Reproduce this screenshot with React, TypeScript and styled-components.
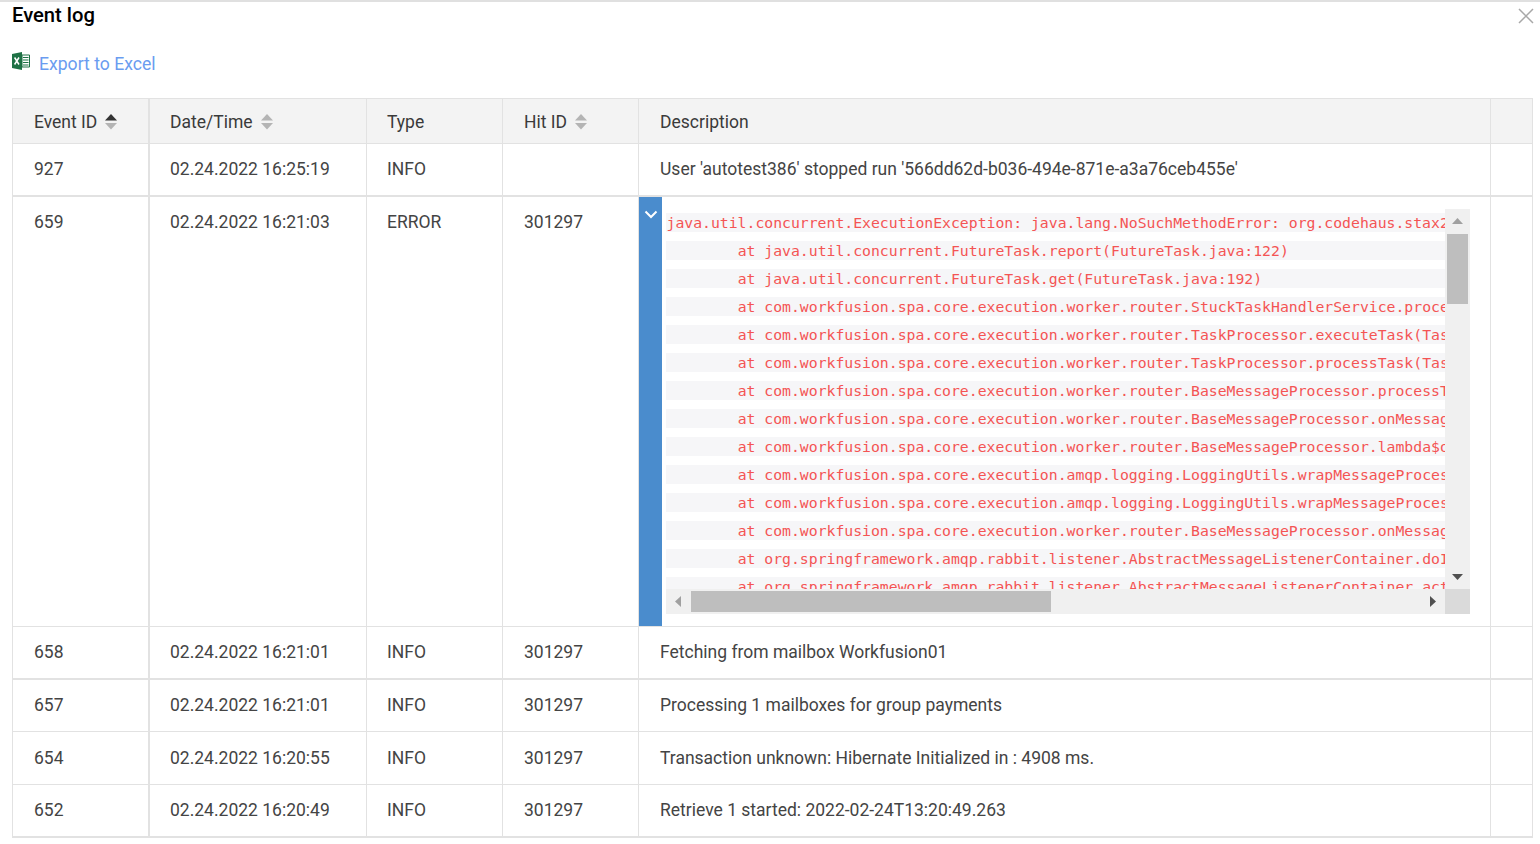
import React from 'react';
import styled, { createGlobalStyle } from 'styled-components';

const GlobalStyle = createGlobalStyle`
  html, body {
    margin: 0;
    padding: 0;
    background: #fff;
    font-family: Roboto, "Liberation Sans", sans-serif;
    overflow: hidden;
  }
`;

const Page = styled.div`
  width: 1540px;
  height: 844px;
  border-top: 2px solid #e0e0e0;
  box-sizing: border-box;
  padding: 0 7px 0 12px;
  overflow: hidden;
`;

const TitleRow = styled.div`
  height: 26px;
  display: flex;
  align-items: flex-start;
  justify-content: space-between;
`;

const Title = styled.h1`
  margin: 0;
  font-size: 20.2px;
  font-weight: 500;
  color: #000;
  line-height: 26px;
`;

const CloseIcon = styled.svg`
  width: 16px;
  height: 16px;
  margin-top: 6px;
  stroke: #a8a8a8;
  stroke-width: 1.5;
  position: relative;
  left: 1px;
`;

const ExportRow = styled.div`
  height: 70px;
  display: flex;
  align-items: flex-start;
  gap: 9px;
  padding-top: 24px;
  box-sizing: border-box;
`;

const ExportLink = styled.a`
  font-size: 17.6px;
  line-height: 24px;
  color: #6a9cf0;
  cursor: pointer;
`;

const ExcelIcon = styled.svg`
  width: 18px;
  height: 18px;
`;

const Table = styled.table`
  width: 1521px;
  table-layout: fixed;
  border-collapse: separate;
  border-spacing: 0;
  border-top: 1px solid #e2e2e2;
  border-left: 1px solid #e2e2e2;
  font-size: 17.5px;
  color: #444;
`;

const HeadRow = styled.tr`
  height: 45px;
  background: #f3f3f3;
  color: #3a3a3a;
`;

const Row = styled.tr<{ $height: number }>`
  height: ${p => p.$height}px;
`;

const Head = styled.th<{ $thick?: boolean }>`
  padding: 1px 0 0 21px;
  font-weight: 400;
  text-align: left;
  border-right: ${p => (p.$thick ? 2 : 1)}px solid #e2e2e2;
  border-bottom: 1px solid #e2e2e2;
  box-sizing: border-box;

  &:nth-child(2),
  &:nth-child(3) {
    padding-left: 20px;
  }
`;

const Cell = styled.td<{ $thick?: boolean; $bottom?: number; $top?: boolean }>`
  padding: ${p => (p.$top ? '13px 0 0 21px' : '0 0 1px 21px')};
  vertical-align: ${p => (p.$top ? 'top' : 'middle')};
  border-right: ${p => (p.$thick ? 2 : 1)}px solid #e2e2e2;
  border-bottom: ${p => p.$bottom ?? 1}px solid #e2e2e2;
  box-sizing: border-box;
  line-height: 24px;

  &:nth-child(2),
  &:nth-child(3) {
    padding-left: 20px;
  }
`;

const HeadInner = styled.span`
  display: inline-flex;
  align-items: center;
  gap: 8px;
`;

const SortIcon = styled.svg`
  width: 12px;
  height: 18px;
`;

const DetailCell = styled.td`
  padding: 0;
  border-right: 1px solid #e2e2e2;
  border-bottom: 1px solid #e2e2e2;
`;

const DetailWrap = styled.div`
  height: 429px;
  display: flex;
`;

const ExpandBar = styled.div`
  width: 23px;
  flex: none;
  background: #4a8ccd;
  display: flex;
  justify-content: center;
  padding-top: 13px;
  box-sizing: border-box;
`;

const LogBox = styled.div`
  margin: 12px 0 12px 4px;
  width: 804px;
  height: 405px;
  display: grid;
  grid-template-columns: 779px 25px;
  grid-template-rows: 380px 25px;
`;

const LogView = styled.div`
  overflow: hidden;
  padding-top: 4px;
  box-sizing: border-box;
`;

const LogLine = styled.div`
  height: 19px;
  margin-bottom: 9px;
  background: #f6f6f8;
  padding-left: 0.5px;
  font-family: "DejaVu Sans Mono", monospace;
  font-size: 14.78px;
  line-height: 19px;
  color: #f45454;
  white-space: pre;
  tab-size: 8;
  overflow: hidden;
`;

const VBar = styled.div`
  background: #f0f0f0;
  display: flex;
  flex-direction: column;
  align-items: center;
  justify-content: space-between;
  padding-top: 9px;
  padding-bottom: 9px;
  box-sizing: border-box;
  position: relative;
`;

const VThumb = styled.div`
  position: absolute;
  left: 2px;
  top: 25px;
  width: 21px;
  height: 70px;
  background: #bebebe;
`;

const HBar = styled.div`
  background: #f0f0f0;
  display: flex;
  align-items: center;
  justify-content: space-between;
  padding: 0 9px;
  box-sizing: border-box;
  position: relative;
`;

const HThumb = styled.div`
  position: absolute;
  left: 25px;
  top: 2px;
  width: 360px;
  height: 21px;
  background: #bebebe;
`;

const Corner = styled.div`
  background: #dadada;
`;

const Arrow = styled.svg`
  display: block;
  flex: none;
`;

const columns = [
  { title: 'Event ID', sort: 'asc' },
  { title: 'Date/Time', sort: 'none' },
  { title: 'Type' },
  { title: 'Hit ID', sort: 'none' },
  { title: 'Description' },
  { title: '' },
];

const logLines = [
  'java.util.concurrent.ExecutionException: java.lang.NoSuchMethodError: org.codehaus.stax2.ri.Stax2ReaderAdapter',
  '\tat java.util.concurrent.FutureTask.report(FutureTask.java:122)',
  '\tat java.util.concurrent.FutureTask.get(FutureTask.java:192)',
  '\tat com.workfusion.spa.core.execution.worker.router.StuckTaskHandlerService.processTask(StuckTaskHandlerService.java:88)',
  '\tat com.workfusion.spa.core.execution.worker.router.TaskProcessor.executeTask(TaskProcessor.java:140)',
  '\tat com.workfusion.spa.core.execution.worker.router.TaskProcessor.processTask(TaskProcessor.java:96)',
  '\tat com.workfusion.spa.core.execution.worker.router.BaseMessageProcessor.processTask(BaseMessageProcessor.java:70)',
  '\tat com.workfusion.spa.core.execution.worker.router.BaseMessageProcessor.onMessage(BaseMessageProcessor.java:52)',
  '\tat com.workfusion.spa.core.execution.worker.router.BaseMessageProcessor.lambda$onMessage$0(BaseMessageProcessor.java:48)',
  '\tat com.workfusion.spa.core.execution.amqp.logging.LoggingUtils.wrapMessageProcessing(LoggingUtils.java:31)',
  '\tat com.workfusion.spa.core.execution.amqp.logging.LoggingUtils.wrapMessageProcessing(LoggingUtils.java:24)',
  '\tat com.workfusion.spa.core.execution.worker.router.BaseMessageProcessor.onMessage(BaseMessageProcessor.java:47)',
  '\tat org.springframework.amqp.rabbit.listener.AbstractMessageListenerContainer.doInvokeListener(AbstractMessageListenerContainer.java:1)',
  '\tat org.springframework.amqp.rabbit.listener.AbstractMessageListenerContainer.actualInvokeListener(AbstractMessageListenerContainer.java:1)',
];

const rowsAfter = [
  { id: '658', time: '02.24.2022 16:21:01', type: 'INFO', hit: '301297', text: 'Fetching from mailbox Workfusion01', h: 53, b: 2 },
  { id: '657', time: '02.24.2022 16:21:01', type: 'INFO', hit: '301297', text: 'Processing 1 mailboxes for group payments', h: 52, b: 1 },
  { id: '654', time: '02.24.2022 16:20:55', type: 'INFO', hit: '301297', text: 'Transaction unknown: Hibernate Initialized in : 4908 ms.', h: 53, b: 1 },
  { id: '652', time: '02.24.2022 16:20:49', type: 'INFO', hit: '301297', text: 'Retrieve 1 started: 2022-02-24T13:20:49.263', h: 53, b: 2 },
];

const Sort: React.FC<{ active?: boolean }> = ({ active }) => (
  <SortIcon viewBox="0 0 12 18">
    <path d="M6 1 L12 7.5 H0 Z" fill={active ? '#333' : '#b4b4b4'} />
    <path d="M0 10 H12 L6 16.5 Z" fill="#b4b4b4" />
  </SortIcon>
);

const App: React.FC = () => (
  <Page>
    <GlobalStyle />
    <TitleRow>
      <Title>Event log</Title>
      <CloseIcon viewBox="0 0 16 16">
        <path d="M1 1 L15 15 M15 1 L1 15" fill="none" />
      </CloseIcon>
    </TitleRow>
    <ExportRow>
      <ExcelIcon viewBox="0 0 18 18">
        <path d="M0 2 L10 0 V18 L0 16 Z" fill="#1e7145" />
        <path d="M10 3 H17.5 V15 H10 Z" fill="#fff" stroke="#1e7145" strokeWidth="1" />
        <path d="M11 5.5 H16.5 M11 8 H16.5 M11 10.5 H16.5 M11 13 H16.5" stroke="#1e7145" strokeWidth="1.2" />
        <path d="M2.6 5.5 L7 12.5 M7 5.5 L2.6 12.5" stroke="#fff" strokeWidth="1.5" />
      </ExcelIcon>
      <ExportLink>Export to Excel</ExportLink>
    </ExportRow>
    <Table>
      <colgroup>
        <col width="137" />
        <col width="217" />
        <col width="136" />
        <col width="136" />
        <col width="852" />
        <col width="42" />
      </colgroup>
      <thead>
        <HeadRow>
          {columns.map((c, i) => (
            <Head key={i} $thick={i === 0}>
              <HeadInner>
                {c.title}
                {c.sort && <Sort active={c.sort === 'asc'} />}
              </HeadInner>
            </Head>
          ))}
        </HeadRow>
      </thead>
      <tbody>
        <Row $height={53}>
          <Cell $thick $bottom={2}>927</Cell>
          <Cell $bottom={2}>02.24.2022 16:25:19</Cell>
          <Cell $bottom={2}>INFO</Cell>
          <Cell $bottom={2}></Cell>
          <Cell $bottom={2}>User 'autotest386' stopped run '566dd62d-b036-494e-871e-a3a76ceb455e'</Cell>
          <Cell $bottom={2}></Cell>
        </Row>
        <Row $height={430}>
          <Cell $thick $top>659</Cell>
          <Cell $top>02.24.2022 16:21:03</Cell>
          <Cell $top>ERROR</Cell>
          <Cell $top>301297</Cell>
          <DetailCell>
            <DetailWrap>
              <ExpandBar>
                <Arrow width="14" height="9" viewBox="0 0 14 9">
                  <path d="M1.5 1.5 L7 7 L12.5 1.5" fill="none" stroke="#fff" strokeWidth="2" />
                </Arrow>
              </ExpandBar>
              <LogBox>
                <LogView>
                  {logLines.map((l, i) => (
                    <LogLine key={i}>{l}</LogLine>
                  ))}
                </LogView>
                <VBar>
                  <Arrow width="11" height="6" viewBox="0 0 11 6">
                    <path d="M5.5 0 L11 6 H0 Z" fill="#a0a0a0" />
                  </Arrow>
                  <VThumb />
                  <Arrow width="11" height="6" viewBox="0 0 11 6">
                    <path d="M0 0 H11 L5.5 6 Z" fill="#505050" />
                  </Arrow>
                </VBar>
                <HBar>
                  <Arrow width="6" height="11" viewBox="0 0 6 11">
                    <path d="M6 0 V11 L0 5.5 Z" fill="#a0a0a0" />
                  </Arrow>
                  <HThumb />
                  <Arrow width="6" height="11" viewBox="0 0 6 11">
                    <path d="M0 0 L6 5.5 L0 11 Z" fill="#505050" />
                  </Arrow>
                </HBar>
                <Corner />
              </LogBox>
            </DetailWrap>
          </DetailCell>
          <Cell></Cell>
        </Row>
        {rowsAfter.map(r => (
          <Row key={r.id} $height={r.h}>
            <Cell $thick $bottom={r.b}>{r.id}</Cell>
            <Cell $bottom={r.b}>{r.time}</Cell>
            <Cell $bottom={r.b}>{r.type}</Cell>
            <Cell $bottom={r.b}>{r.hit}</Cell>
            <Cell $bottom={r.b}>{r.text}</Cell>
            <Cell $bottom={r.b}></Cell>
          </Row>
        ))}
      </tbody>
    </Table>
  </Page>
);

export default App;
